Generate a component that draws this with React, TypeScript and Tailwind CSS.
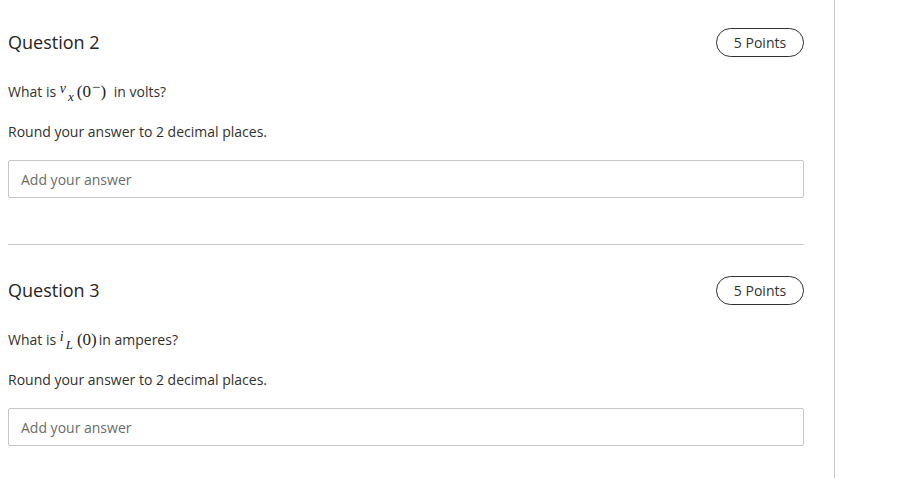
const font = { fontFamily: '"Open Sans", "Liberation Sans", sans-serif' };
const serif = { fontFamily: '"Liberation Serif", "DejaVu Serif", serif' };

function PointsPill() {
  return (
    <span className="flex h-[29px] w-[88px] items-center justify-center rounded-full border border-[#323130] text-[14px] text-[#323130]">
      5 Points
    </span>
  );
}

function AnswerBox() {
  return (
    <input
      type="text"
      placeholder="Add your answer"
      className="h-[38px] w-full rounded-[2px] border border-[#c8c8c8] bg-white px-3 text-[14px] text-[#323130] placeholder:text-[#6b6b6b] focus:outline-none"
      style={font}
    />
  );
}

function Question({
  title,
  prompt,
  first,
}: {
  title: string;
  prompt: React.ReactNode;
  first?: boolean;
}) {
  return (
    <section className={first ? 'pt-[28px]' : 'pt-[31px]'}>
      <div className="flex items-center justify-between">
        <h2 className="text-[18px] leading-[29px] text-[#252423]">{title}</h2>
        <PointsPill />
      </div>
      <p className="mt-[25px] h-[20px] text-[14px] leading-[20px] text-[#323130]">{prompt}</p>
      <p className="mt-[20px] text-[14px] leading-[20px] text-[#323130]">
        Round your answer to 2 decimal places.
      </p>
      <div className="mt-[18px]">
        <AnswerBox />
      </div>
    </section>
  );
}

export default function App() {
  return (
    <div className="flex h-[478px] w-[898px] overflow-hidden bg-white" style={font}>
      <main className="h-full w-[835px] border-r border-[#c8c8c8] pl-2 pr-[30px]">
        <Question
          first
          title="Question 2"
          prompt={
            <>
              What is{' '}
              <span style={serif} className="leading-none text-[#222]">
                <span className="relative top-[-4px] text-[14px] italic">v</span>
                <span className="relative top-[4px] ml-[2px] text-[13px] italic">x</span>
                <span className="ml-[3px] mr-[4px] text-[17px]">
                  (0<span className="relative top-[-5px] ml-[1px] text-[15px]">−</span>)
                </span>
              </span>{' '}
              in volts?
            </>
          }
        />
        <div className="mt-[46px] h-px bg-[#c8c8c8]" />
        <Question
          title="Question 3"
          prompt={
            <>
              What is{' '}
              <span style={serif} className="leading-none text-[#222]">
                <span className="relative top-[-4px] text-[14px] italic">i</span>
                <span className="relative top-[4px] ml-[2px] text-[13px] italic">L</span>
                <span className="ml-[4px] mr-[2px] text-[17px]">(0)</span>
              </span>
              in amperes?
            </>
          }
        />
      </main>
    </div>
  );
}
